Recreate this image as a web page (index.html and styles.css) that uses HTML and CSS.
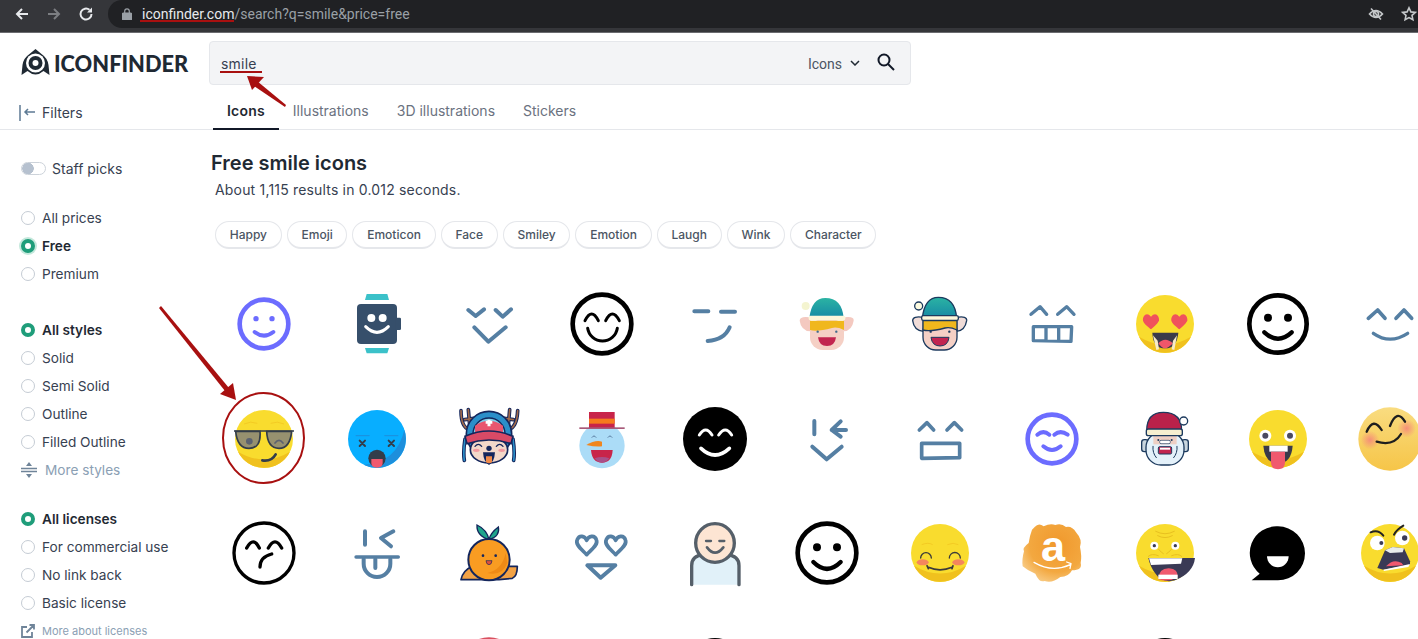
FILE: index.html
```html
<!DOCTYPE html>
<html lang="en">

<head>
    <meta charset="UTF-8">
    <meta name="viewport" content="width=device-width, initial-scale=1.0">
    <title>Free smile icons</title>
    <link rel="stylesheet" href="styles.css">
</head>

<body>
    <svg class="defs" width="0" height="0">
        <defs>
            <g id="yellow">
                <circle r="87" fill="#f9dc2e"/>
                <path d="M-78 38A87 87 0 0 0 78 38Q0 85-78 38Z" fill="#f0c11e"/>
            </g>
            <linearGradient id="elfhat" x1="0" y1="0" x2="0" y2="1">
                <stop offset="0" stop-color="#2bb3a3"/>
                <stop offset="1" stop-color="#1689a5"/>
            </linearGradient>
            <linearGradient id="warm" x1="0" y1="0" x2="0" y2="1">
                <stop offset="0" stop-color="#f9dc80"/>
                <stop offset="1" stop-color="#f6c548"/>
            </linearGradient>
            <radialGradient id="cheek">
                <stop offset="0" stop-color="#f58f78"/>
                <stop offset="1" stop-color="#f58f78" stop-opacity="0"/>
            </radialGradient>
            <radialGradient id="blob" cx=".6" cy=".35" r=".8">
                <stop offset="0" stop-color="#f0982c"/>
                <stop offset=".6" stop-color="#f3a840"/>
                <stop offset="1" stop-color="#fad9a0"/>
            </radialGradient>
        </defs>
    </svg>

    <!-- browser bar -->
    <div class="chrome">
        <div class="navs">
            <svg class="nav" viewBox="0 0 16 16"><path d="M14 8H3M8 3L3 8l5 5"/></svg>
            <svg class="nav off" viewBox="0 0 16 16"><path d="M2 8h11M8 3l5 5-5 5"/></svg>
            <svg class="nav" viewBox="0 0 16 16"><path d="M13.5 8A5.5 5.5 0 1 1 11.5 3.8"/><path class="solid" d="M14 1.5V6.5H9Z"/></svg>
        </div>
        <div class="omnibox">
            <svg class="lock" viewBox="0 0 10 12"><rect x="0.500" y="5" width="9" height="7" rx="1"/><path d="M2.700 5V3.200a2.300 2.300 0 0 1 4.600 0V5"/></svg>
            <span class="url"><b>iconfinder.com</b>/search?q=smile&amp;price=free</span>
            <svg class="eyeoff" viewBox="0 0 16 16"><path d="M1.5 8Q8 1 14.500 8Q8 15 1.500 8Z"/><circle cx="8" cy="8" r="2.500"/><path d="M3 2.500l10 11"/></svg>
            <svg class="star" viewBox="0 0 16 16"><path d="M8 1.800l1.900 4.100 4.400.5-3.300 3 .9 4.400L8 11.600l-3.900 2.200.9-4.400-3.300-3 4.400-.5z"/></svg>
        </div>
    </div>

    <header class="top">
        <div class="brand">
            <a class="logo">
                <svg width="29" height="28" viewBox="0 0 28 28"><path fill="#1f2933" d="M14 0l6 5q6 4 7 11l1 10-6-4q-8 7-16 0l-6 4L1 16Q2 9 8 5Z"/><circle cx="14" cy="14" r="9.500" fill="#fff"/><circle cx="14" cy="14" r="7" fill="#1f2933"/><circle cx="14" cy="14" r="3" fill="#fff"/></svg>
                <span>ICONFINDER</span>
            </a>
            <div class="filters">
                <svg width="17" height="16" viewBox="0 0 17 16"><path d="M1 0v16M16 7H6M9 4L6 7l3 3"/></svg>
                Filters
            </div>
        </div>
        <div class="searcharea">
            <div class="search">
                <span class="query">smile</span>
                <span class="kind">Icons</span>
                <svg class="chev" width="10" height="6" viewBox="0 0 10 6"><path d="M1 1l4 4 4-4"/></svg>
                <svg class="glass" width="18" height="18" viewBox="0 0 18 18"><circle cx="7" cy="7" r="5.500"/><path d="M11 11l6 6"/></svg>
            </div>
            <nav class="tabs">
                <a class="tab active">Icons</a>
                <a class="tab">Illustrations</a>
                <a class="tab">3D illustrations</a>
                <a class="tab">Stickers</a>
            </nav>
        </div>
    </header>

    <div class="content">
        <aside class="sidebar">
            <div class="group first">
                <div class="row toggle-row"><span class="toggle"></span>Staff picks</div>
            </div>
            <div class="group">
                <div class="row"><span class="radio"></span>All prices</div>
                <div class="row on"><span class="radio checked halo"></span>Free</div>
                <div class="row"><span class="radio"></span>Premium</div>
            </div>
            <div class="group wide">
                <div class="row on"><span class="radio checked"></span>All styles</div>
                <div class="row"><span class="radio"></span>Solid</div>
                <div class="row"><span class="radio"></span>Semi Solid</div>
                <div class="row"><span class="radio"></span>Outline</div>
                <div class="row"><span class="radio"></span>Filled Outline</div>
                <div class="row more">
                    <svg width="16" height="16" viewBox="0 0 16 16"><path d="M0 6.500h16M0 9.500h16" stroke="#6f8499" stroke-width="1.500"/><path d="M8 0l3 4H5zM8 16l3-4H5z" fill="#6f8499"/></svg>
                    More styles
                </div>
            </div>
            <div class="group">
                <div class="row on"><span class="radio checked"></span>All licenses</div>
                <div class="row"><span class="radio"></span>For commercial use</div>
                <div class="row"><span class="radio"></span>No link back</div>
                <div class="row"><span class="radio"></span>Basic license</div>
                <div class="row about">
                    <svg width="14" height="14" viewBox="0 0 14 14"><path d="M11 8v5H1V3h5M5.500 8.500L13 1M8.500 1H13v4.500" fill="none" stroke="#6f8499" stroke-width="1.800"/></svg>
                    More about licenses
                </div>
            </div>
        </aside>

        <main class="results">
            <h1>Free smile icons</h1>
            <p class="count">About 1,115 results in 0.012 seconds.</p>
            <div class="chips">
                <a class="chip">Happy</a>
                <a class="chip">Emoji</a>
                <a class="chip">Emoticon</a>
                <a class="chip">Face</a>
                <a class="chip">Smiley</a>
                <a class="chip">Emotion</a>
                <a class="chip">Laugh</a>
                <a class="chip">Wink</a>
                <a class="chip">Character</a>
            </div>

            <div class="icons">
                <!-- row 1 -->
                <div class="cell"><svg viewBox="-114 -114 228 228"><g class="ln purple"><circle r="73" stroke-width="14"/><path d="M-28 24Q0 46 28 24" stroke-width="12"/></g><circle cx="-24" cy="-16" r="8" fill="#6c6cff"/><circle cx="24" cy="-16" r="8" fill="#6c6cff"/></svg></div>
                <div class="cell"><svg viewBox="-114 -114 228 228"><path d="M-31-90H31L36-72H-36ZM-36 72H36L31 88H-31Z" fill="#3bc1c9"/><rect x="-60" y="-60" width="120" height="120" rx="12" fill="#364f6b"/><rect x="55" y="-19" width="17" height="37" rx="4" fill="#364f6b"/><circle cx="-17" cy="-18" r="12" fill="#fff"/><circle cx="17" cy="-18" r="12" fill="#fff"/><path class="ln" d="M-34 8Q0 42 34 8" stroke="#fff" stroke-width="9"/></svg></div>
                <div class="cell"><svg viewBox="-114 -114 228 228"><g class="ln blue" stroke-width="12"><path d="M-62-42L-40-24-15-44M20-42L41-22 66-44M-44 10L-2 53 50 10"/></g></svg></div>
                <div class="cell"><svg viewBox="-114 -114 228 228"><g class="ln black"><circle r="88" stroke-width="14"/><path d="M-51-10Q-31-50-11-10M11-10Q31-50 52-10M-43 13A45 45 0 0 0 46 13" stroke-width="9"/></g></svg></div>
                <div class="cell"><svg viewBox="-114 -114 228 228"><g class="ln blue"><path d="M-62-38H-20M18-37H60" stroke-width="12"/><path d="M-22 51Q28 48 44 10" stroke-width="12"/></g></svg></div>
                <div class="cell"><svg viewBox="-114 -114 228 228"><circle cx="-64" cy="-54" r="12" fill="#f4f4d0"/><path d="M-50-20Q-82-25-82-10-78 20-50 22ZM50-20Q82-25 80-10 75 20 50 22Z" fill="#f4c9c0"/><rect x="-51" y="-15" width="102" height="93" rx="38" fill="#f5d0c5"/><path d="M-51-10H51V18Q30 8 15 12-30 24-51 18Z" fill="#f0b71d"/><path d="M-53-18Q-46-78-5-78 45-78 50-18Z" fill="url(#elfhat)"/><rect x="-55" y="-25" width="110" height="14" rx="5" fill="#fdf6da"/><circle cx="-28" cy="23" r="3.500" fill="#3e6a8a"/><circle cx="28" cy="23" r="3.500" fill="#3e6a8a"/><path d="M-27 40H27Q24 66 0 66-24 66-27 40Z" fill="#c2254f"/></svg></div>
                <div class="cell"><svg viewBox="-114 -114 228 228"><g stroke="#1c3a5e" stroke-width="4"><circle cx="-64" cy="-54" r="12" fill="#fdfbe0"/><path d="M-50-20Q-82-25-82-10-78 20-50 22ZM50-20Q82-25 80-10 75 20 50 22Z" fill="#f0dcd8"/><rect x="-51" y="-15" width="102" height="93" rx="38" fill="#f5d0c5"/><path d="M-51-10H51V18Q30 8 15 12-30 24-51 18Z" fill="#f0b71d"/><path d="M-53-18Q-46-80-5-80 45-80 50-18Z" fill="url(#elfhat)"/><rect x="-55" y="-25" width="110" height="14" rx="5" fill="#fdf6da"/></g><circle cx="-28" cy="23" r="3.500" fill="#1c3a5e"/><circle cx="28" cy="23" r="3.500" fill="#1c3a5e"/><path d="M-27 40H27Q24 66 0 66-24 66-27 40Z" fill="#c2254f" stroke="#1c3a5e" stroke-width="3"/></svg></div>
                <div class="cell"><svg viewBox="-114 -114 228 228"><g class="ln blue" stroke-width="10"><path d="M-63-29L-36-52-16-29M17-29L44-52 66-29"/><path d="M-56 8H59L57 52-56 50ZM-18 10V50M20 10V50"/></g></svg></div>
                <div class="cell"><svg viewBox="-114 -114 228 228"><use href="#yellow"/><path d="M-42-22C-30-38-16-26-18-10-24 2-36 10-42 16-48 10-62 2-66-10-68-26-54-38-42-22ZM43-22C55-38 69-26 67-10 61 2 49 10 43 16 37 10 23 2 19-10 17-26 31-38 43-22Z" fill="#f0525c"/><path d="M-38 26H40Q36 73 0 73-36 73-38 26Z" fill="#3a3a4a"/><path d="M-20 58Q0 36 24 58 8 74 0 73-10 73-20 58Z" fill="#f0566a"/><path d="M-36 34L-26 78-18 76-22 50ZM36 34L28 78 20 76 24 50Z" fill="#f7ecc8"/></svg></div>
                <div class="cell"><svg viewBox="-114 -114 228 228"><g class="ln black"><circle r="86" stroke-width="14"/><path d="M-41 25Q0 63 41 25" stroke-width="13"/></g><circle cx="-30" cy="-19" r="12"/><circle cx="30" cy="-19" r="12"/></svg></div>
                <div class="cell"><svg viewBox="-114 -114 228 228"><g class="ln blue"><path d="M-65-17L-37-42-15-17M18-17L42-42 65-17" stroke-width="11"/><path d="M-50 28Q0 63 53 28" stroke-width="10"/></g></svg></div>

                <!-- row 2 -->
                <div class="cell"><svg viewBox="-114 -114 228 228"><use href="#yellow"/><path d="M-60-45Q-40-55-20-47M20-47Q40-55 60-45" fill="none" stroke="#f0c11e" stroke-width="2"/><g stroke="#333d4a" stroke-width="5"><path d="M-85-23H-12Q-8 28-45 28-80 28-85-23Z" fill="#97916f"/><path d="M8-23H83Q78 28 45 28 10 28 8-23Z" fill="#97916f"/><path d="M-90-24H90" fill="none"/></g><circle cx="-44" cy="7" r="10" fill="#5b6270"/><path class="ln" d="M33 12Q45-4 57 12" stroke="#5b6270" stroke-width="5"/><path class="ln" d="M-5 64Q23 68 35 46" stroke="#333d4a" stroke-width="8"/></svg></div>
                <div class="cell"><svg viewBox="-114 -114 228 228"><circle r="87" fill="#08aeff"/><path d="M82-28A87 87 0 0 1-40 77Q60 70 82-28Z" fill="#1d8fdc"/><path d="M-64-10H-22M22-10H64" stroke="#1d8fdc" stroke-width="3"/><path class="ln" d="M-52 5L-36 21M-36 5L-52 21M35 5L51 21M51 5L35 21" stroke="#333d4a" stroke-width="6"/><circle cy="58" r="26" fill="#333d4a"/><path d="M-17 60H17V72Q17 86 0 86-17 86-17 72Z" fill="#f0596e"/></svg></div>
                <div class="cell"><svg viewBox="-114 -114 228 228"><g class="ln" stroke="#14265c" stroke-width="11"><path d="M-58-28Q-84-35-84-85M-58-42L-62-88M-73-58L-45-62M58-28Q84-35 86-85M58-42L62-88M73-58L45-62M-72 0Q-78 40-74 64M72 0Q78 40 74 64"/></g><g class="ln" stroke="#a0694a" stroke-width="5"><path d="M-58-28Q-84-35-84-85M-58-42L-62-88M-73-58L-45-62M58-28Q84-35 86-85M58-42L62-88M73-58L45-62"/></g><path class="ln" d="M-72 0Q-78 40-74 64M72 0Q78 40 74 64" stroke="#2b8fc9" stroke-width="5"/><circle cy="-15" r="68" fill="#2b8fc9" stroke="#14265c" stroke-width="5"/><circle cy="-15" r="48" fill="#7fd0ea" stroke="#14265c" stroke-width="4"/><ellipse cy="32" rx="56" ry="40" fill="#f3d8c9" stroke="#14265c" stroke-width="5"/><path d="M-42-40Q0-70 42-40V-15H-42Z" fill="#e8566f"/><path d="M-72-8Q0-40 72-8L66 14Q0-8-66 14Z" fill="#d94a66" stroke="#14265c" stroke-width="5"/><path d="M-10-50H10M0-58V-38" stroke="#fff" stroke-width="9"/><path class="ln" d="M-42 22Q-32 10-22 22M22 22Q32 10 42 22" stroke="#14265c" stroke-width="4"/><ellipse cx="-38" cy="34" rx="10" ry="5" fill="#f29aa0"/><ellipse cx="38" cy="34" rx="10" ry="5" fill="#f29aa0"/><circle cy="28" r="8" fill="#14265c"/><path d="M-18 40H18Q16 70 0 78-16 70-18 40Z" fill="#14265c"/><path d="M-9 52H9V70Q0 76-9 70Z" fill="#f08a4a"/></svg></div>
                <div class="cell"><svg viewBox="-114 -114 228 228"><circle cy="20" r="68" fill="#abdcf7"/><rect x="-39" y="-81" width="77" height="48" fill="#c8244a"/><rect x="-39" y="-61" width="77" height="15" fill="#f67a1e"/><rect x="-68" y="-35" width="136" height="5" fill="#a85a7a"/><path class="ln" d="M-30-5Q-24-14-18-5M18-5Q24-14 30-5" stroke="#5b7fa3" stroke-width="3"/><path d="M-47 18Q-20 2 0 8V22Q-20 24-47 18Z" fill="#f0861e"/><path d="M-33 33H32Q30 71 0 71-30 71-33 33Z" fill="#c8244a"/><path d="M-22 58Q0 50 22 58 12 71 0 71-12 71-22 58Z" fill="#a8508a"/></svg></div>
                <div class="cell"><svg viewBox="-114 -114 228 228"><circle r="96"/><g class="ln white"><path d="M-47-12Q-28-42-9-12M11-12Q31-42 50-12" stroke-width="9"/><path d="M-42 28Q0 68 43 28" stroke-width="11"/></g></svg></div>
                <div class="cell"><svg viewBox="-114 -114 228 228"><g class="ln blue" stroke-width="12"><path d="M-38-54V-14M57-27H14M41-53L14-27 41-7M-44 23L-1 61 44 23"/></g></svg></div>
                <div class="cell"><svg viewBox="-114 -114 228 228"><g class="ln blue" stroke-width="11"><path d="M-62-27L-39-49-19-27M21-27L43-49 65-27M-55 13H59V56L-55 58Z"/></g></svg></div>
                <div class="cell"><svg viewBox="-114 -114 228 228"><g class="ln purple"><circle r="73" stroke-width="14"/><path d="M-44-13Q-26-28-8-13M7-13Q25-28 47-13M-26 22Q0 44 26 22" stroke-width="12"/></g></svg></div>
                <div class="cell"><svg viewBox="-114 -114 228 228"><g stroke="#1c3a5e" stroke-width="4"><rect x="-70" y="2" width="20" height="36" rx="8" fill="#c9d6df"/><rect x="50" y="2" width="20" height="36" rx="8" fill="#c9d6df"/><rect x="-57" y="-20" width="114" height="98" rx="45" fill="#e4f1fa"/><path d="M-55-25Q-55-80-5-80 50-80 50-25Z" fill="#b9214a"/><circle cx="56" cy="-54" r="12" fill="#fff"/></g><rect x="-35" y="-14" width="70" height="30" fill="#eecfc4"/><rect x="-56" y="-30" width="108" height="20" rx="6" fill="#f6efd0" stroke="#1c3a5e" stroke-width="4"/><circle cx="-20" cy="3" r="3" fill="#1c3a5e"/><circle cx="20" cy="3" r="3" fill="#1c3a5e"/><rect x="-16" y="4" width="32" height="10" rx="4" fill="#fff" stroke="#1c3a5e" stroke-width="2"/><path class="ln" d="M-36 22Q-38 42-26 56M36 22Q38 42 26 56" stroke="#1c3a5e" stroke-width="3"/><rect x="-20" y="23" width="40" height="22" rx="4" fill="#c2254f" stroke="#1c3a5e" stroke-width="3"/><rect x="-15" y="26" width="30" height="6" fill="#fff"/></svg></div>
                <div class="cell"><svg viewBox="-114 -114 228 228"><use href="#yellow"/><path d="M-44 20H44Q40 73 0 73-40 73-44 20Z" fill="#3a3a4a"/><rect x="-26" y="20" width="55" height="18" fill="#fff"/><circle cx="-38" cy="-10" r="18" fill="#fff"/><circle cx="36" cy="-10" r="18" fill="#fff"/><circle cx="-38" cy="-10" r="9" fill="#4a4a60"/><circle cx="36" cy="-10" r="9" fill="#4a4a60"/><path d="M-21 38H21V70Q21 91 0 91-21 91-21 70Z" fill="#f0596e"/></svg></div>
                <div class="cell"><svg viewBox="-114 -114 228 228"><circle r="95" fill="url(#warm)"/><circle cx="-60" cy="3" r="28" fill="url(#cheek)"/><circle cx="50" cy="-32" r="28" fill="url(#cheek)"/><g class="ln" stroke="#1e1e1e" stroke-width="7"><path d="M-70-22Q-50-67-25-27M0-39Q20-92 45-52M-40 8Q10 23 33-15"/></g></svg></div>

                <!-- row 3 -->
                <div class="cell"><svg viewBox="-114 -114 228 228"><g class="ln black"><circle r="90" stroke-width="10"/><path d="M-52-15Q-32-52-14-15M13-15Q33-52 53-15M-12 42Q-12 12 23 3" stroke-width="10"/></g></svg></div>
                <div class="cell"><svg viewBox="-114 -114 228 228"><g class="ln blue"><path d="M-36-65V-25M49-65L12-45 42-20" stroke-width="12"/><path d="M-63 12H64" stroke-width="10"/><path d="M-40 18V32A40 40 0 0 0 40 32V18M-5 18V45" stroke-width="12"/></g></svg></div>
                <div class="cell"><svg viewBox="-114 -114 228 228"><path d="M-84 80Q-78 52-50 40L50 40 85 40Q85 70 70 76L30 80Z" fill="#f2a245" stroke="#14265c" stroke-width="5" stroke-linejoin="round"/><path d="M0-40Q-6-70-36-84-38-52 0-40ZM0-40Q4-60 28-78 34-50 0-40Z" fill="#1fa58c" stroke="#14265c" stroke-width="4"/><circle cy="20" r="62" fill="#f99c22" stroke="#14265c" stroke-width="6"/><path d="M50 0Q40 50-5 60 40 70 55 30Z" fill="#ee8a16"/><circle cx="-18" cy="8" r="4" fill="#14265c"/><circle cx="20" cy="8" r="4" fill="#14265c"/><path d="M-9 23H9Q8 35 0 35-8 35-9 23Z" fill="#e1503c" stroke="#14265c" stroke-width="2"/></svg></div>
                <div class="cell"><svg viewBox="-114 -114 228 228"><g class="ln blue" stroke-width="11"><path d="M-46 5C-60-10-82-25-74-40-68-55-52-52-46-38-40-52-22-55-17-40-10-25-32-10-46 5ZM41 5C27-10 5-25 13-40 19-55 35-52 41-38 47-52 65-55 70-40 77-25 55-10 41 5Z"/><path d="M-44 37H40L-4 74Z" stroke-width="12"/></g></svg></div>
                <div class="cell"><svg viewBox="-114 -114 228 228"><path d="M-70 95V38Q-70 8-35 5H35Q72 8 72 38V95" fill="#e1f1f9"/><path class="ln" d="M-70 95V38Q-70 8-35 5M35 5Q72 8 72 38V95" stroke="#555f69" stroke-width="10"/><circle cy="-30" r="58" fill="#fde5d3" stroke="#555f69" stroke-width="10"/><g class="ln" stroke="#555f69"><path d="M-27-36H-12M13-36H28" stroke-width="7"/><path d="M-24-17Q0 15 25-17" stroke-width="8"/></g></svg></div>
                <div class="cell"><svg viewBox="-114 -114 228 228"><g class="ln black"><circle r="88" stroke-width="14"/><path d="M-41 27Q0 68 41 27" stroke-width="13"/></g><circle cx="-30" cy="-17" r="12"/><circle cx="30" cy="-17" r="12"/></svg></div>
                <div class="cell"><svg viewBox="-114 -114 228 228"><use href="#yellow"/><path d="M-55-25Q-35-33-22-25M22-25Q40-33 55-25" fill="none" stroke="#f0c11e" stroke-width="2"/><ellipse cx="-52" cy="28" rx="18" ry="9" fill="#f4865d"/><ellipse cx="55" cy="28" rx="18" ry="9" fill="#f4865d"/><g class="ln" stroke="#3a3a3a"><path d="M-58 15A15 15 0 0 1-26 15M28 15A15 15 0 0 1 61 15" stroke-width="4"/><path d="M-35 43Q0 58 36 43M-39 38L-35 47M39 38L36 47" stroke-width="5"/></g></svg></div>
                <div class="cell"><svg viewBox="-114 -114 228 228"><path d="M-52-78Q-40-92-25-80-5-90 10-84 28-90 42-78 60-82 72-62 92-40 84-18 90 10 86 30 92 52 60 52 50 72 25 72 0 92-22 84-38 90-50 62-72 54-88 40-91 20-84-5-90-15-70-30-66-55-60-70-52-78Z" fill="url(#blob)"/><text class="amazon" x="3" y="25">a</text><path class="ln" d="M-54 28Q0 60 55 35M44 27L57 32 54 46" stroke="#fff" stroke-width="4"/></svg></div>
                <div class="cell"><svg viewBox="-114 -114 228 228"><use href="#yellow"/><path class="ln" d="M-28-65Q0-50 28-65M-22-52Q0-40 22-52M-20-12Q-10 0-5 2M20-12Q10 0 5 2M-50 10Q-40 0-20 8M50 10Q40 0 20 8" stroke="#e8c020" stroke-width="3"/><path d="M-50 15H90Q85 60 30 82-10 92-30 60-45 40-50 15Z" fill="#3a3a55"/><path d="M-48 16H52L48 32-42 36Z" fill="#fff"/><path d="M-20 78Q-18 45 12 46 40 48 38 72 10 90-20 78Z" fill="#f0596e"/><path d="M-20 65H38V78H-20Z" fill="#fff"/><circle cx="-32" cy="-22" r="12" fill="#fff"/><circle cx="31" cy="-22" r="12" fill="#fff"/><circle cx="-32" cy="-22" r="5" fill="#3a3a55"/><circle cx="31" cy="-22" r="5" fill="#3a3a55"/></svg></div>
                <div class="cell"><svg viewBox="-114 -114 228 228"><path d="M0-80A80 80 0 0 1 0 82H-79L-55 62A80 80 0 0 1 0-80Z"/><path d="M-33 10H32A32.500 32.500 0 0 1-33 10Z" fill="#fff"/></svg></div>
                <div class="cell"><svg viewBox="-114 -114 228 228"><use href="#yellow"/><circle cx="-38" cy="-30" r="22" fill="#fff"/><circle cx="37" cy="-45" r="22" fill="#fff"/><circle cx="-26" cy="-30" r="6" fill="#3a3a55"/><circle cx="44" cy="-45" r="8" fill="#3a3a55"/><path class="ln" d="M-58-62Q-35-72-20-52M12-55Q20-70 40-82" stroke="#222" stroke-width="6"/><path d="M-15-8L8-18 42-14 60 25 60 35-20 50-38 45Z" fill="#3a3a55"/><path d="M-15-8L8-18 42-14 38-2 0 0Z" fill="#e8ecec"/><path d="M-20 50L60 33 55 42-18 54Z" fill="#fff"/><path d="M-12 40Q10 15 35 30L40 37Z" fill="#f0596e"/></svg></div>

                <!-- row 4, only the tops show -->
                <div class="cell"></div>
                <div class="cell"></div>
                <div class="cell"><svg viewBox="-114 -114 228 228"><circle r="92" fill="#d9505f"/></svg></div>
                <div class="cell"></div>
                <div class="cell"><svg viewBox="-114 -114 228 228"><circle r="90"/></svg></div>
                <div class="cell"></div>
                <div class="cell"></div>
                <div class="cell"></div>
                <div class="cell"><svg viewBox="-114 -114 228 228"><circle r="90"/></svg></div>
            </div>
        </main>
    </div>

    <!-- red marks drawn on the screenshot -->
    <svg class="marks" width="1418" height="639" viewBox="0 0 1418 639">
        <path d="M140 21H234M220 72H262" fill="none" stroke="#a81010" stroke-width="2"/>
        <path d="M286 105L285 107 254 86 257 81Z" fill="#a81010"/>
        <path d="M247 76L264 77 252 90Z" fill="#a81010"/>
        <path d="M159 308L161 306 229 388 225 391Z" fill="#a81010"/>
        <path d="M236 400L220 394 233 383Z" fill="#a81010"/>
        <ellipse cx="263.500" cy="438" rx="40.500" ry="45" fill="none" stroke="#a81010" stroke-width="2"/>
    </svg>
</body>

</html>
```

FILE: styles.css
```css
* {
    margin: 0;
    padding: 0;
    box-sizing: border-box;
}

html,
body {
    height: 639px;
    overflow: hidden;
}

body {
    position: relative;
    background: #fff;
    color: #2b3440;
    font-family: 'Inter', sans-serif;
    font-size: 14px;
}

.defs {
    position: absolute;
}

/* browser bar */
.chrome {
    display: flex;
    height: 33px;
    background: #35363a;
    border-bottom: 1px solid #6b6c70;
    padding-bottom: 4px;
}

.navs {
    display: flex;
    width: 108px;
    padding: 6px 0 0 14px;
    gap: 16px;
}

.nav {
    width: 16px;
    height: 16px;
    fill: none;
    stroke: #e8eaed;
    stroke-width: 2;
}

.nav.off {
    stroke: #7c7e82;
}

.nav .solid {
    fill: #e8eaed;
    stroke: none;
}

.omnibox {
    flex: 1;
    display: flex;
    align-items: center;
    background: #202124;
    border-radius: 14px 0 0 14px;
    padding-left: 14px;
}

.lock {
    width: 10px;
    height: 12px;
    fill: none;
    stroke: #9aa0a6;
    stroke-width: 1.2;
}

.lock rect {
    fill: #9aa0a6;
}

.url {
    flex: 1;
    margin-left: 10px;
    color: #9aa0a6;
    font-family: 'Roboto', sans-serif;
    font-size: 14px;
}

.url b {
    color: #e8eaed;
    font-weight: 400;
}

.eyeoff,
.star {
    width: 16px;
    height: 16px;
    fill: none;
    stroke: #c4c7c9;
    stroke-width: 1.6;
}

.eyeoff {
    margin-right: 17px;
}

.star {
    margin-right: 1px;
}

/* header */
.top {
    display: grid;
    grid-template-columns: 208px 1fr;
    height: 97px;
    border-bottom: 1px solid #e5e7eb;
}

.brand {
    padding: 16px 0 0 21px;
}

.logo {
    display: flex;
    align-items: center;
    gap: 4px;
    color: #1f2933;
    font-family: 'Lato', sans-serif;
    font-size: 21.800px;
    font-weight: 900;
}

.filters {
    display: flex;
    align-items: center;
    gap: 6px;
    margin: 27px 0 0 -2px;
    color: #374151;
}

.filters svg {
    fill: none;
    stroke: #5d7a94;
    stroke-width: 1.5;
}

.searcharea {
    display: flex;
    flex-direction: column;
}

.search {
    display: flex;
    align-items: center;
    width: 702px;
    height: 44px;
    margin: 8px 0 0 1px;
    padding: 0 15px 0 11px;
    background: #f3f4f6;
    border: 1px solid #e5e7eb;
    border-radius: 4px;
}

.query {
    flex: 1;
    color: #374151;
    letter-spacing: .2px;
}

.kind {
    padding-top: 1px;
    color: #4b5563;
    font-family: 'Roboto', sans-serif;
}

.chev {
    margin: 0 17px 0 8px;
    fill: none;
    stroke: #1f2933;
    stroke-width: 1.5;
}

.glass {
    margin-top: -2px;
    fill: none;
    stroke: #111827;
    stroke-width: 2;
}

.tabs {
    display: flex;
    margin: 12px 0 0 5px;
    flex: 1;
}

.tab {
    padding: 5px 14px 0;
    color: #6b7280;
}

.tab.active {
    color: #1f2933;
    font-weight: 600;
    letter-spacing: .2px;
    border-bottom: 2px solid #111827;
    margin-bottom: -1px;
}

/* sidebar */
.content {
    display: grid;
    grid-template-columns: 208px minmax(0, 1fr);
    height: 606px;
    overflow: hidden;
}

.sidebar {
    padding: 24px 0 0 21px;
}

.group {
    margin-bottom: 21px;
}

.group.first {
    margin-bottom: 22px;
}

.group.wide {
    margin-top: 28px;
}

.row {
    display: flex;
    align-items: center;
    gap: 7px;
    height: 28px;
    color: #374151;
    font-size: 13.650px;
    white-space: nowrap;
}

.row.on {
    color: #1f2933;
    font-weight: 600;
}

.toggle-row {
    gap: 6px;
    font-size: 14px;
}

.toggle {
    width: 25px;
    height: 13px;
    border: 1px solid #cdd3da;
    border-radius: 7px;
    background: radial-gradient(circle at 6px 5.500px, #b6c1cf 5.500px, transparent 6px);
}

.radio {
    flex: none;
    width: 14px;
    height: 14px;
    border: 1px solid #c5ccd4;
    border-radius: 50%;
}

.radio.checked {
    border: 4px solid #1f9d7a;
    background: #fff;
}

.radio.halo {
    box-shadow: 0 0 0 2px #c5e8dc;
}

.more {
    gap: 8px;
    color: #8ba0b4;
}

.about {
    gap: 7px;
    color: #8ba0b4;
    font-size: 11px;
}

/* results */
.results {
    padding-top: 20px;
    min-width: 0;
}

h1 {
    margin-left: 3px;
    color: #1f2933;
    font-size: 20px;
    font-weight: 600;
    line-height: 26px;
}

.count {
    margin: 5px 0 0 7px;
    color: #374151;
    line-height: 17px;
    letter-spacing: .18px;
}

.chips {
    display: flex;
    gap: 5px;
    margin: 23px 0 0 7px;
}

.chip {
    padding: 0 13.750px;
    height: 28px;
    line-height: 26px;
    color: #4b5563;
    font-size: 12px;
    font-weight: 500;
    border: 1px solid #e5e7eb;
    border-bottom-width: 2px;
    border-radius: 14px;
}

.icons {
    display: grid;
    grid-template-columns: repeat(11, 112.6px);
    grid-auto-rows: 114.5px;
    margin-top: 18px;
}

.cell {
    display: flex;
    align-items: center;
    justify-content: center;
}

.cell svg {
    width: 76px;
    height: 76px;
    flex: none;
}

.ln {
    fill: none;
    stroke-linecap: round;
    stroke-linejoin: round;
}

.ln.purple {
    stroke: #6c6cff;
}

.ln.blue {
    stroke: #557fa3;
}

.ln.black {
    stroke: #000;
}

.ln.white {
    stroke: #fff;
}

.amazon {
    fill: #fff;
    font-family: 'Liberation Sans', sans-serif;
    font-size: 130px;
    font-weight: 700;
    text-anchor: middle;
}

.marks {
    position: absolute;
    top: 0;
    left: 0;
    pointer-events: none;
}
```
